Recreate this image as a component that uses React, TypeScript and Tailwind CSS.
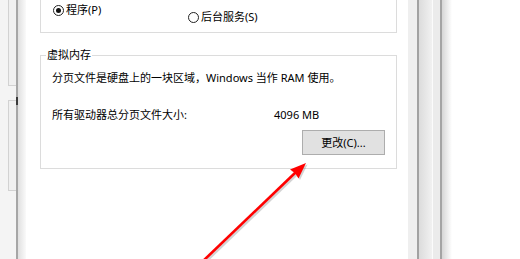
const font = "font-['Noto_Sans','Noto_Sans_CJK_SC',sans-serif]";

const LeftEdge = () => (
    <div className="w-[26px] h-full flex shrink-0">
        <div className="w-[8px] h-full bg-[#f4f4f4]" />
        <div className="w-[8px] h-full flex flex-col bg-[#f4f4f4]">
            <div className="h-[86px] border-l border-b border-[#d2d2d2] bg-[#f0f0f0]" />
            <div className="h-[14px]" />
            <div className="h-[91px] border-l border-t border-b border-[#d2d2d2] bg-[#f0f0f0]" />
        </div>
        <div className="w-[2px] h-full bg-[#a6a6a6] flex flex-col">
            <div className="h-[97px]" />
            <div className="h-[8px] w-[2px] bg-[#3a3a3a]" />
        </div>
        <div className="w-[8px] h-full bg-gradient-to-r from-[#e0e0e0] to-[#fafafa]" />
    </div>
);

const RightEdge = () => (
    <div className="w-[44px] h-full flex shrink-0">
        <div className="w-[9px] h-full bg-[#efefef]" />
        <div className="w-[2px] h-full bg-[#a2a2a2]" />
        <div className="w-[13px] h-full bg-gradient-to-r from-[#dcdcdc] to-[#f1f1f1]" />
        <div className="w-[1px] h-full bg-[#fbfbfb]" />
        <div className="w-[7px] h-full bg-[#ebebeb]" />
        <div className="w-[2px] h-full bg-[#a4a4a4]" />
        <div className="w-[10px] h-full bg-gradient-to-r from-[#d6d6d6] to-white" />
    </div>
);

const Radio = ({ checked, label }: { checked: boolean; label: string }) => (
    <div className="flex items-center gap-[2px]">
        <div className="w-[11px] h-[11px] rounded-full border border-[#222] flex items-center justify-center bg-white">
            {checked && <div className="w-[5px] h-[5px] rounded-full bg-[#111]" />}
        </div>
        <span className="text-[11px] leading-[16px]">{label}</span>
    </div>
);

const Arrow = () => (
    <svg className="absolute inset-0 pointer-events-none" width={520} height={259} viewBox="0 0 520 259">
        <g opacity={0.25} transform="translate(1.5 1.5)">
            <line x1={202} y1={262} x2={296} y2={172} stroke="#555" strokeWidth={3} />
            <polygon points="306,163 298.5,178.5 295,173 290,169.5" fill="#555" />
        </g>
        <line x1={202} y1={262} x2={296} y2={172} stroke="#ff0000" strokeWidth={2.6} />
        <polygon points="306,163 298.5,178.5 295,173 290,169.5" fill="#ff0000" />
    </svg>
);

export default function App() {
    return (
        <div className={`w-[520px] h-[259px] relative overflow-hidden bg-white flex text-black ${font}`}>
            <LeftEdge />
            <div className="w-[382px] h-full shrink-0 pl-[14px] pr-[11px] flex flex-col">
                <div className="-mt-[21px] h-[54px] border border-[#dcdcdc] pt-[22px] pl-[12px] flex">
                    <div className="w-[135px]">
                        <Radio checked label="程序(P)" />
                    </div>
                    <Radio checked={false} label="后台服务(S)" />
                </div>
                <div className="relative mt-[22px] h-[114px] border border-[#dcdcdc] pt-[14px] pl-[11px] pr-[11px] flex flex-col">
                    <span className="absolute left-[5px] -top-[8px] px-[1px] bg-white text-[11px] leading-[14px]">虚拟内存</span>
                    <div className="text-[11px] leading-[16px]">分页文件是硬盘上的一块区域，Windows 当作 RAM 使用。</div>
                    <div className="mt-[21px] flex text-[11px] leading-[16px]">
                        <span className="w-[222px]">所有驱动器总分页文件大小:</span>
                        <span>4096 MB</span>
                    </div>
                    <div className="mt-[7px] flex justify-end">
                        <button className="w-[83px] h-[25px] bg-[#e1e1e1] border border-[#adadad] text-[11px] leading-[16px] flex items-center justify-center">
                            更改(C)...
                        </button>
                    </div>
                </div>
            </div>
            <RightEdge />
            <div className="flex-1 h-full bg-white" />
            <Arrow />
        </div>
    );
}
